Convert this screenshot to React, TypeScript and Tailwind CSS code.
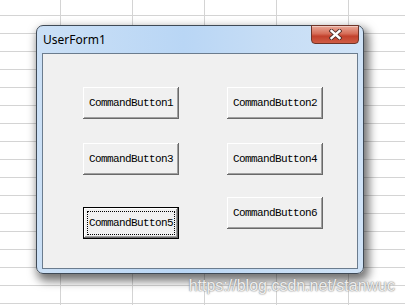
import type { ReactNode } from 'react';

function CmdButton({ label, focused, className = '' }: { label: string; focused?: boolean; className?: string }) {
  if (focused) {
    return (
      <div className={`w-[96px] h-[32px] border border-black bg-[#f0f0f0] p-0 ${className}`}>
        <div className="w-full h-full flex items-center justify-center shadow-[inset_-1px_-1px_#696969,inset_1px_1px_#ffffff,inset_-2px_-2px_#a0a0a0] p-[3px]">
          <div className="w-full h-full border border-dotted border-black flex items-center justify-center">
            <span className="font-['Liberation_Mono',monospace] text-[11px] tracking-[-0.6px] text-black leading-none">{label}</span>
          </div>
        </div>
      </div>
    );
  }
  return (
    <div
      className={`w-[96px] h-[32px] bg-[#f0f0f0] flex items-center justify-center shadow-[inset_-1px_-1px_#696969,inset_1px_1px_#ffffff,inset_-2px_-2px_#a0a0a0] ${className}`}
    >
      <span className="font-['Liberation_Mono',monospace] text-[11px] tracking-[-0.6px] text-black leading-none">{label}</span>
    </div>
  );
}

function Column({ children, className = '' }: { children: ReactNode; className?: string }) {
  return <div className={`flex flex-col ${className}`}>{children}</div>;
}

export default function App() {
  return (
    <div className="w-[405px] h-[305px] overflow-hidden bg-white bg-[linear-gradient(to_right,#d4d4d4_1px,transparent_1px),linear-gradient(to_bottom,#d4d4d4_1px,transparent_1px)] bg-size-[72px_18px] bg-position-[60px_15px] pt-[25px] pl-[36px]">
      {/* UserForm window */}
      <div className="w-[328px] h-[249px] rounded-[7px] border border-[#3f4a56] bg-[linear-gradient(to_right,#cbe0f6,#b9d6f5_45%,#c6ddf5_70%,#d0e3f7)] shadow-[3px_5px_10px_2px_rgba(0,0,0,0.55)] flex flex-col">
        {/* Title bar */}
        <div className="h-[27px] flex items-start justify-between">
          <span className="pl-[6px] pt-[6px] font-['Noto_Sans',sans-serif] text-[12px] leading-[16px] text-black">UserForm1</span>
          <div className="mt-[-1px] mr-[4px] w-[48px] h-[19px] rounded-b-[4px] border border-[#6e3428] bg-[linear-gradient(to_bottom,#e9a999,#d66d58_45%,#c2412c_60%,#cf5c45)] shadow-[inset_0_1px_0_rgba(255,255,255,0.4)] flex items-center justify-center">
            <svg width="13" height="11" viewBox="0 0 13 11">
              <path d="M2.5 2 L10.5 9 M10.5 2 L2.5 9" stroke="#4a2a26" strokeWidth="4.2" strokeLinecap="square" />
              <path d="M2.5 2 L10.5 9 M10.5 2 L2.5 9" stroke="#ffffff" strokeWidth="2.4" strokeLinecap="square" />
            </svg>
          </div>
        </div>
        {/* Client area */}
        <div className="mx-[5px] h-[216px] border border-[#6b7c8e] bg-[#f0f0f0] flex pl-[40px] pt-[33px]">
          <Column>
            <CmdButton label="CommandButton1" />
            <CmdButton label="CommandButton3" className="mt-[24px]" />
            <CmdButton label="CommandButton5" focused className="mt-[32px]" />
          </Column>
          <Column className="ml-[48px]">
            <CmdButton label="CommandButton2" />
            <CmdButton label="CommandButton4" className="mt-[24px]" />
            <CmdButton label="CommandButton6" className="mt-[22px]" />
          </Column>
        </div>
      </div>
      {/* watermark */}
      <div className="w-[359px] mt-[3px] text-right font-['Liberation_Sans',sans-serif] text-[16px] leading-[18px] text-[#eeeeee] [text-shadow:0_0_2px_#7a7a7a,0_0_1px_#9a9a9a]">
        https://blog.csdn.net/stanwuc
      </div>
    </div>
  );
}
